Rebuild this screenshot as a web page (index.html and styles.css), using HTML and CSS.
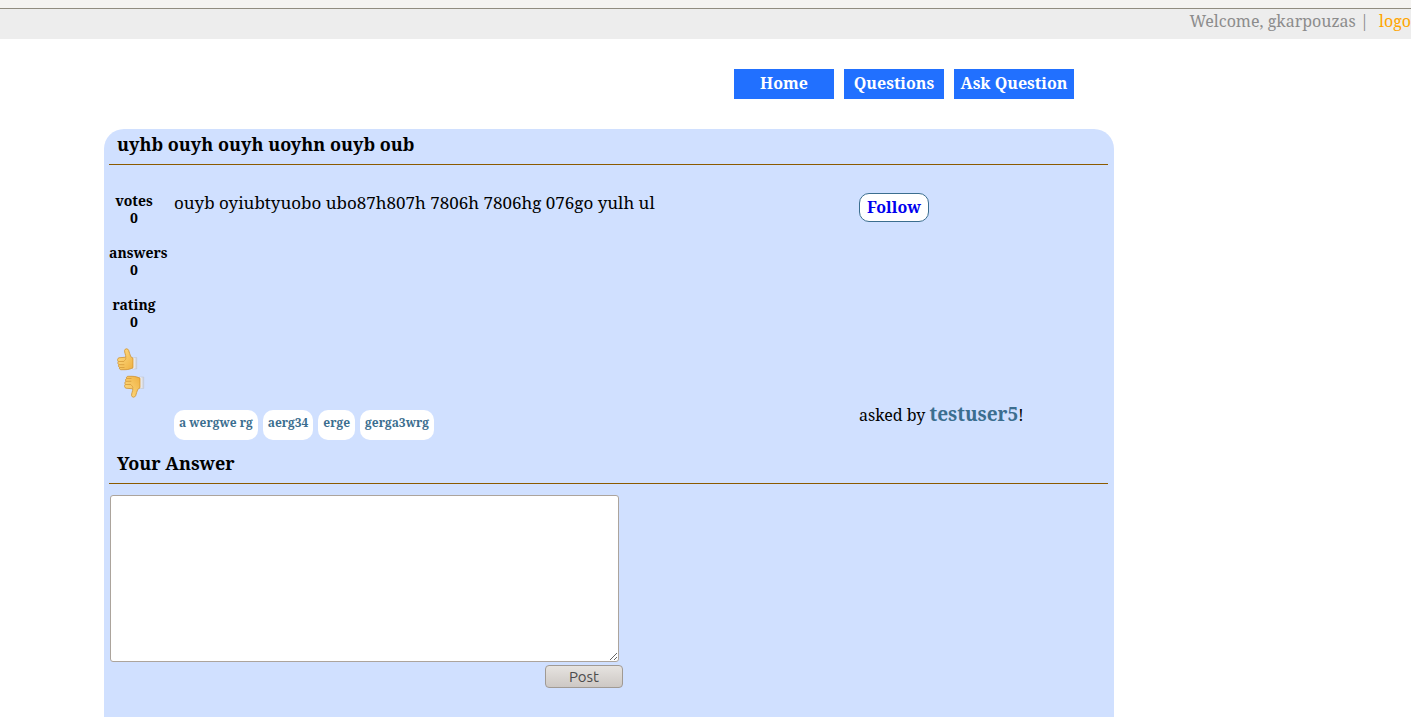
FILE: index.html
```html
<!DOCTYPE html>
<html lang="en">
<head>
    <meta charset="utf-8">
    <meta name="viewport" content="width=device-width, initial-scale=1">
    <title>uyhb ouyh ouyh uoyhn ouyb oub</title>
    <link rel="stylesheet" href="styles.css">
</head>
<body>
    <div class="topstrip"></div>
    <header class="userbar">
        <span>Welcome, gkarpouzas |</span>
        <a href="#">logo</a>
    </header>

    <div class="page">
        <nav class="menu">
            <a href="#">Home</a>
            <a href="#">Questions</a>
            <a href="#" class="ask">Ask Question</a>
        </nav>

        <main class="question">
            <h1 class="title">uyhb ouyh ouyh uoyhn ouyb oub</h1>

            <div class="content">
                <div class="stats">
                    <div class="stat"><span>votes</span><span>0</span></div>
                    <div class="stat"><span>answers</span><span>0</span></div>
                    <div class="stat"><span>rating</span><span>0</span></div>
                    <div class="thumbs">
                        <button type="button" class="thumb" aria-label="Vote up">
                            <svg width="22" height="24" viewBox="0 0 22 24">
                                <defs>
                                    <linearGradient id="skin" x1="0" y1="0" x2="1" y2="1">
                                        <stop offset="0" stop-color="#ffe08a"/>
                                        <stop offset="1" stop-color="#efb040"/>
                                    </linearGradient>
                                    <linearGradient id="cuff" x1="0" y1="0" x2="1" y2="0">
                                        <stop offset="0" stop-color="#ffffff"/>
                                        <stop offset="1" stop-color="#c9ccd6"/>
                                    </linearGradient>
                                    <g id="hand">
                                        <path d="M15.500 9.500h4.200v11.500h-4.200z" fill="url(#cuff)" stroke="#c3c7d0" stroke-width=".6"/>
                                        <path d="M8.800 9.200C8.900 7 7.300 4.500 7.600 2.300 8 .4 10.800.3 11.600 2.200c.8 2 1.200 4.500 2.200 6.500l2.200 1.500v9.600c-2.500 1.200-5 1.900-8 1.900H4.200c-1.600 0-2.100-1.200-1.600-2.200-1.200-.6-1.400-2-.8-2.800C.7 16 .6 14.500 1.300 13.700.2 12.500.3 10.200 2 9.800z" fill="url(#skin)" stroke="#cf9230" stroke-width=".8"/>
                                        <path d="M1.500 13.500h5.500M2 16.700h5.300M2.800 19.500h4.700M8.800 9.500c.2 1.700-.5 2.700-1.600 3.400" fill="none" stroke="#d59b3a" stroke-width=".8"/>
                                    </g>
                                </defs>
                                <use href="#hand"/>
                            </svg>
                        </button>
                        <button type="button" class="thumb down" aria-label="Vote down">
                            <svg width="22" height="24" viewBox="0 0 22 24">
                                <use href="#hand" transform="matrix(1 0 0 -1 0 23)"/>
                            </svg>
                        </button>
                    </div>
                </div>

                <div class="text">
                    <p>ouyb oyiubtyuobo ubo87h807h 7806h 7806hg 076go yulh ul</p>
                    <div class="tags">
                        <a href="#">a wergwe rg</a>
                        <a href="#">aerg34</a>
                        <a href="#">erge</a>
                        <a href="#">gerga3wrg</a>
                    </div>
                </div>

                <div class="side">
                    <a href="#" class="follow">Follow</a>
                    <p class="asked">asked by <a href="#">testuser5</a>!</p>
                </div>
            </div>

            <h2 class="title"><label for="answer">Your Answer</label></h2>
            <form class="answer">
                <textarea id="answer"></textarea>
                <button type="button" class="post">Post</button>
            </form>
        </main>
    </div>
</body>
</html>
```
FILE: styles.css
```css
*
{
  box-sizing: border-box;
  margin: 0;
  padding: 0;
}

html, body
{
  height: 100%;
}

body
{
  display: flex;
  flex-direction: column;
  background: #fff;
  color: #000;
  font-family: "Droid Serif", "Noto Serif", "DejaVu Serif", serif;
  font-size: 16px;
  line-height: 22px;
}

a
{
  text-decoration: none;
}

.topstrip
{
  height: 9px;
  flex-shrink: 0;
  background: #f4f3f1;
  border-bottom: 1px solid #908c80;
}

.userbar
{
  display: flex;
  justify-content: flex-end;
  gap: 10px;
  height: 30px;
  flex-shrink: 0;
  padding-top: 1px;
  background: #ededed;
  color: #8c8c8c;
}

.userbar a
{
  color: #ffa500;
}

.page
{
  display: flex;
  flex-direction: column;
  flex-grow: 1;
  max-width: 1114px;
  padding-left: 104px;
}

.menu
{
  display: flex;
  justify-content: flex-end;
  gap: 10px;
  padding: 30px 40px;
}

.menu a
{
  width: 100px;
  height: 30px;
  background: #2170ff;
  color: #fff;
  font-weight: bold;
  line-height: 28px;
  text-align: center;
}

.menu .ask
{
  width: 120px;
}

.question
{
  flex-grow: 1;
  padding: 0 5px;
  background: #d0e0ff;
  border-radius: 20px 20px 0 0;
}

.title
{
  height: 36px;
  margin-right: 1px;
  padding: 4px 8px;
  border-bottom: 1px solid #8b5a00;
  font-size: 18px;
  line-height: 22px;
}

.content
{
  display: grid;
  grid-template-columns: 65px 685px 1fr;
  padding: 27px 0 8px;
}

.stats
{
  padding-bottom: 38px;
  font-size: 14px;
  font-weight: bold;
  line-height: 17px;
}

.stat
{
  width: 50px;
  margin-bottom: 18px;
  text-align: center;
}

.stat span
{
  display: block;
}

.thumbs
{
  padding-left: 8px;
}

.thumb
{
  display: block;
  height: 27px;
  border: 0;
  background: none;
  cursor: pointer;
}

.thumb.down
{
  margin-left: 7px;
}

.text, .side
{
  display: flex;
  flex-direction: column;
  justify-content: space-between;
  align-items: flex-start;
}

.text p
{
  font-size: 17px;
}

.tags
{
  display: flex;
  gap: 5px;
}

.tags a
{
  height: 30px;
  padding: 0 5px;
  border-radius: 10px;
  background: #fff;
  color: #3b6e8f;
  font-size: 12px;
  font-weight: bold;
  line-height: 26px;
}

.follow
{
  margin-top: 1px;
  padding: 3px 7px;
  border: 1px solid #3b6e8f;
  border-radius: 10px;
  background: #fff;
  color: #0000ee;
  font-weight: bold;
  line-height: 21px;
}

.asked
{
  padding-bottom: 14px;
}

.asked a
{
  color: #3b6e8f;
  font-size: 19px;
  font-weight: bold;
}

.answer
{
  display: flex;
  flex-direction: column;
  align-items: flex-end;
  gap: 3px;
  width: 514px;
  padding: 11px 0 0 1px;
}

.answer textarea
{
  width: 509px;
  height: 167px;
  margin-right: 4px;
  padding: 2px;
  border: 1px solid #aca49c;
  border-radius: 3px;
  background: #fff;
  font-size: 14px;
}

.post
{
  width: 78px;
  height: 23px;
  border: 1px solid #a09a94;
  border-radius: 4px;
  background: linear-gradient(#e6e3e0, #cdc8c4);
  color: #4c4c4c;
  font-family: "Ubuntu", "Noto Sans", sans-serif;
  font-size: 15px;
  line-height: 20px;
}
```
